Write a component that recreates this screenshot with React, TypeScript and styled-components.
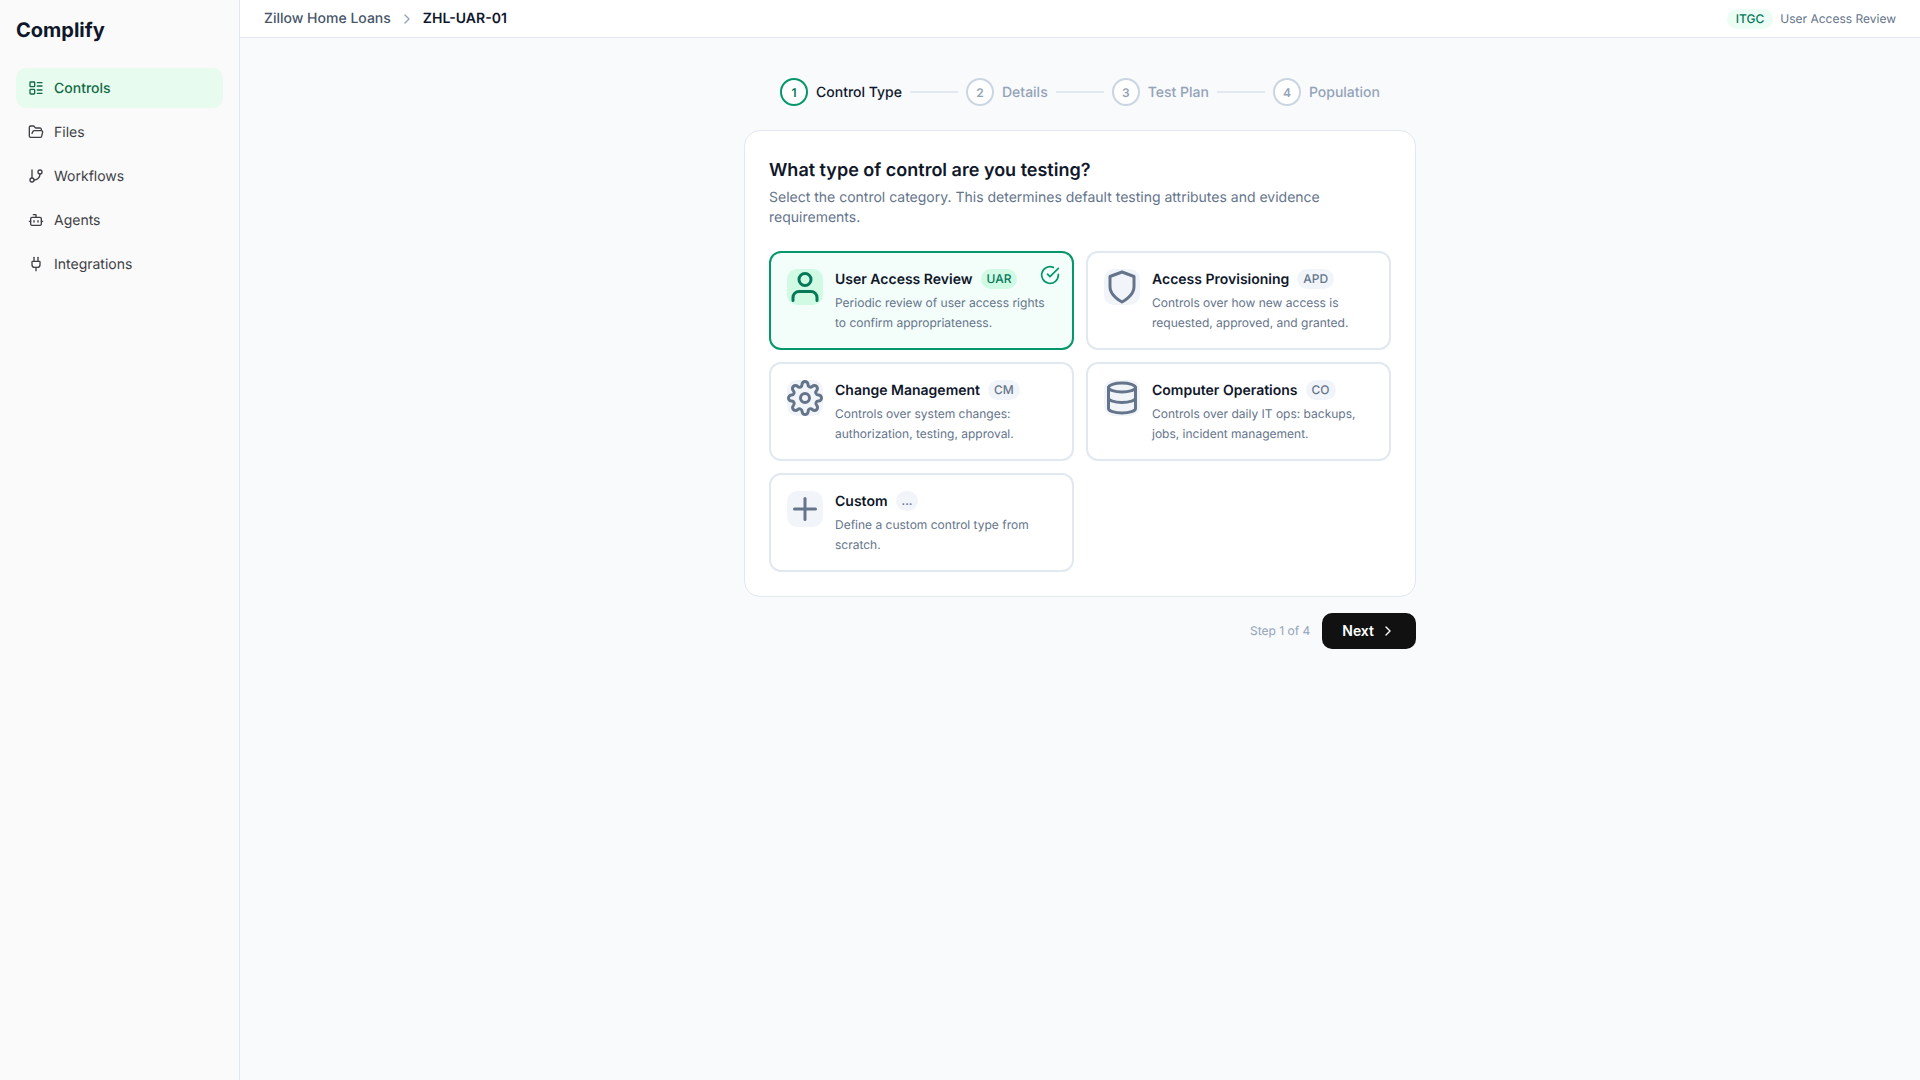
import React from 'react';
import styled, { createGlobalStyle } from 'styled-components';
import { Bot, ChevronRight, FolderOpen, GitBranch, LayoutList, Plug } from 'lucide-react';
import { FiCheckCircle, FiDatabase, FiPlus, FiSettings, FiShield, FiUser } from 'react-icons/fi';

const GlobalStyle = createGlobalStyle`
    html, body {
        margin: 0;
        padding: 0;
        height: 100%;
    }
    body {
        font-family: 'Inter', 'Noto Sans', sans-serif;
        color: #0f172a;
        background: #f8fafc;
        text-rendering: geometricPrecision;
        -webkit-font-smoothing: antialiased;
    }
    * {
        box-sizing: border-box;
    }
`;

const navItems = [
    { label: 'Controls', icon: LayoutList, active: true },
    { label: 'Files', icon: FolderOpen, active: false },
    { label: 'Workflows', icon: GitBranch, active: false },
    { label: 'Agents', icon: Bot, active: false },
    { label: 'Integrations', icon: Plug, active: false },
];

const steps = ['Control Type', 'Details', 'Test Plan', 'Population'];

const controlTypes = [
    {
        title: 'User Access Review',
        code: 'UAR',
        text: 'Periodic review of user access rights to confirm appropriateness.',
        icon: FiUser,
        selected: true,
    },
    {
        title: 'Access Provisioning',
        code: 'APD',
        text: 'Controls over how new access is requested, approved, and granted.',
        icon: FiShield,
        selected: false,
    },
    {
        title: 'Change Management',
        code: 'CM',
        text: 'Controls over system changes: authorization, testing, approval.',
        icon: FiSettings,
        selected: false,
    },
    {
        title: 'Computer Operations',
        code: 'CO',
        text: 'Controls over daily IT ops: backups, jobs, incident management.',
        icon: FiDatabase,
        selected: false,
    },
    {
        title: 'Custom',
        code: '...',
        text: 'Define a custom control type from scratch.',
        icon: FiPlus,
        selected: false,
    },
];

export default function App() {
    return (
        <Shell>
            <GlobalStyle />
            <Sidebar>
                <Brand>Complify</Brand>
                <Nav>
                    {navItems.map(({ label, icon: Icon, active }) => (
                        <NavItem key={label} $active={active}>
                            <Icon size={16} strokeWidth={2} />
                            {label}
                        </NavItem>
                    ))}
                </Nav>
            </Sidebar>
            <Main>
                <TopBar>
                    <Crumbs>
                        <CrumbLink>Zillow Home Loans</CrumbLink>
                        <ChevronRight size={16} color="#94a3b8" />
                        <CrumbCurrent>ZHL-UAR-01</CrumbCurrent>
                    </Crumbs>
                    <TopMeta>
                        <MetaBadge>ITGC</MetaBadge>
                        <MetaText>User Access Review</MetaText>
                    </TopMeta>
                </TopBar>
                <Content>
                    <Column>
                        <Stepper>
                            {steps.map((step, index) => (
                                <React.Fragment key={step}>
                                    {index > 0 && <StepLine />}
                                    <Step>
                                        <StepCircle $active={index === 0}>{index + 1}</StepCircle>
                                        <StepLabel $active={index === 0}>{step}</StepLabel>
                                    </Step>
                                </React.Fragment>
                            ))}
                        </Stepper>
                        <Panel>
                            <Heading>What type of control are you testing?</Heading>
                            <Subheading>
                                Select the control category. This determines default testing attributes and
                                evidence requirements.
                            </Subheading>
                            <CardGrid>
                                {controlTypes.map(({ title, code, text, icon: Icon, selected }) => (
                                    <Card key={title} $selected={selected}>
                                        <IconBox $selected={selected}>
                                            <Icon size={36} />
                                        </IconBox>
                                        <CardBody>
                                            <CardTitleRow>
                                                <CardTitle>{title}</CardTitle>
                                                <CodePill $selected={selected}>{code}</CodePill>
                                            </CardTitleRow>
                                            <CardText>{text}</CardText>
                                        </CardBody>
                                        {selected && (
                                            <CheckMark>
                                                <FiCheckCircle size={20} />
                                            </CheckMark>
                                        )}
                                    </Card>
                                ))}
                            </CardGrid>
                        </Panel>
                        <Footer>
                            <StepCount>Step 1 of 4</StepCount>
                            <NextButton>
                                Next
                                <ChevronRight size={16} strokeWidth={2} />
                            </NextButton>
                        </Footer>
                    </Column>
                </Content>
            </Main>
        </Shell>
    );
}

const Shell = styled.div`
    display: flex;
    height: 1080px;
    overflow: hidden;
`;

const Sidebar = styled.aside`
    width: 240px;
    flex-shrink: 0;
    background: #fafafa;
    border-right: 1px solid #e2e8f0;
    padding: 16px;
`;

const Brand = styled.div`
    font-size: 20px;
    line-height: 28px;
    font-weight: 700;
    color: #0f172a;
`;

const Nav = styled.nav`
    display: flex;
    flex-direction: column;
    gap: 4px;
    margin-top: 24px;
`;

const NavItem = styled.a<{ $active: boolean }>`
    display: flex;
    align-items: center;
    gap: 10px;
    height: 40px;
    padding: 0 12px;
    border-radius: 10px;
    font-size: 14px;
    font-weight: ${({ $active }) => ($active ? 500 : 400)};
    color: ${({ $active }) => ($active ? '#116a45' : '#3f3f46')};
    background: ${({ $active }) => ($active ? '#e8fbef' : 'transparent')};
`;

const Main = styled.main`
    flex: 1;
    min-width: 0;
    display: flex;
    flex-direction: column;
`;

const TopBar = styled.header`
    height: 38px;
    flex-shrink: 0;
    display: flex;
    align-items: center;
    justify-content: space-between;
    padding: 0 24px;
    background: #ffffff;
    border-bottom: 1px solid #e2e8f0;
`;

const Crumbs = styled.div`
    display: flex;
    align-items: center;
    gap: 8px;
    font-size: 14px;
`;

const CrumbLink = styled.span`
    font-weight: 500;
    color: #475569;
`;

const CrumbCurrent = styled.span`
    font-weight: 600;
    color: #0f172a;
`;

const TopMeta = styled.div`
    display: flex;
    align-items: center;
    gap: 7px;
`;

const MetaBadge = styled.span`
    padding: 2px 9px;
    border-radius: 999px;
    background: #ecfdf5;
    color: #047857;
    font-size: 12px;
    line-height: 16px;
    font-weight: 500;
`;

const MetaText = styled.span`
    font-size: 12px;
    line-height: 16px;
    color: #64748b;
`;

const Content = styled.div`
    flex: 1;
    display: flex;
    justify-content: center;
    padding-top: 40px;
`;

const Column = styled.div`
    width: 672px;
`;

const Stepper = styled.div`
    display: flex;
    align-items: center;
    justify-content: center;
    gap: 8px;
    margin-bottom: 24px;
`;

const Step = styled.div`
    display: flex;
    align-items: center;
    gap: 8px;
`;

const StepCircle = styled.div<{ $active: boolean }>`
    width: 28px;
    height: 28px;
    border-radius: 50%;
    display: flex;
    align-items: center;
    justify-content: center;
    font-size: 12px;
    font-weight: 600;
    border: 2px solid ${({ $active }) => ($active ? '#059669' : '#cbd5e1')};
    color: ${({ $active }) => ($active ? '#047857' : '#94a3b8')};
    background: #ffffff;
`;

const StepLabel = styled.span<{ $active: boolean }>`
    font-size: 14px;
    font-weight: 500;
    color: ${({ $active }) => ($active ? '#0f172a' : '#94a3b8')};
`;

const StepLine = styled.div`
    width: 48px;
    height: 2px;
    background: #e2e8f0;
`;

const Panel = styled.section`
    background: #ffffff;
    border: 1px solid #e2e8f0;
    border-radius: 16px;
    padding: 24px;
`;

const Heading = styled.h2`
    margin: 0;
    font-size: 18px;
    line-height: 31px;
    font-weight: 600;
    color: #0f172a;
`;

const Subheading = styled.p`
    margin: 2px 0 23px;
    font-size: 14px;
    line-height: 20px;
    color: #64748b;
`;

const CardGrid = styled.div`
    display: grid;
    grid-template-columns: 1fr 1fr;
    gap: 12px;
`;

const Card = styled.div<{ $selected: boolean }>`
    position: relative;
    display: flex;
    align-items: flex-start;
    gap: 12px;
    padding: 16px;
    border-radius: 12px;
    border: 2px solid ${({ $selected }) => ($selected ? '#059669' : '#e2e8f0')};
    background: ${({ $selected }) => ($selected ? '#f3fdf9' : '#ffffff')};
`;

const IconBox = styled.div<{ $selected: boolean }>`
    width: 36px;
    height: 36px;
    flex-shrink: 0;
    border-radius: 10px;
    display: flex;
    align-items: center;
    justify-content: center;
    background: ${({ $selected }) => ($selected ? '#d1fae5' : '#f1f5f9')};
    color: ${({ $selected }) => ($selected ? '#047857' : '#64748b')};
`;

const CardBody = styled.div`
    min-width: 0;
`;

const CardTitleRow = styled.div`
    display: flex;
    align-items: center;
    gap: 8px;
    margin-bottom: 4px;
`;

const CardTitle = styled.span`
    font-size: 14px;
    font-weight: 600;
    color: #0f172a;
`;

const CodePill = styled.span<{ $selected: boolean }>`
    padding: 2px 6px;
    border-radius: 10px;
    font-size: 12px;
    line-height: 16px;
    font-weight: 500;
    background: ${({ $selected }) => ($selected ? '#d1fae5' : '#f1f5f9')};
    color: ${({ $selected }) => ($selected ? '#047857' : '#64748b')};
`;

const CardText = styled.p`
    margin: 0;
    font-size: 12px;
    line-height: 19.5px;
    color: #64748b;
`;

const CheckMark = styled.span`
    position: absolute;
    top: 12px;
    right: 12px;
    display: flex;
    color: #059669;
`;

const Footer = styled.div`
    display: flex;
    align-items: center;
    justify-content: flex-end;
    gap: 12px;
    margin-top: 16px;
`;

const StepCount = styled.span`
    font-size: 12px;
    line-height: 16px;
    color: #94a3b8;
`;

const NextButton = styled.button`
    display: flex;
    align-items: center;
    gap: 6px;
    height: 36px;
    padding: 0 20px;
    border: none;
    border-radius: 10px;
    background: #111111;
    color: #ffffff;
    font-family: inherit;
    font-size: 14px;
    line-height: 20px;
    font-weight: 600;
`;
